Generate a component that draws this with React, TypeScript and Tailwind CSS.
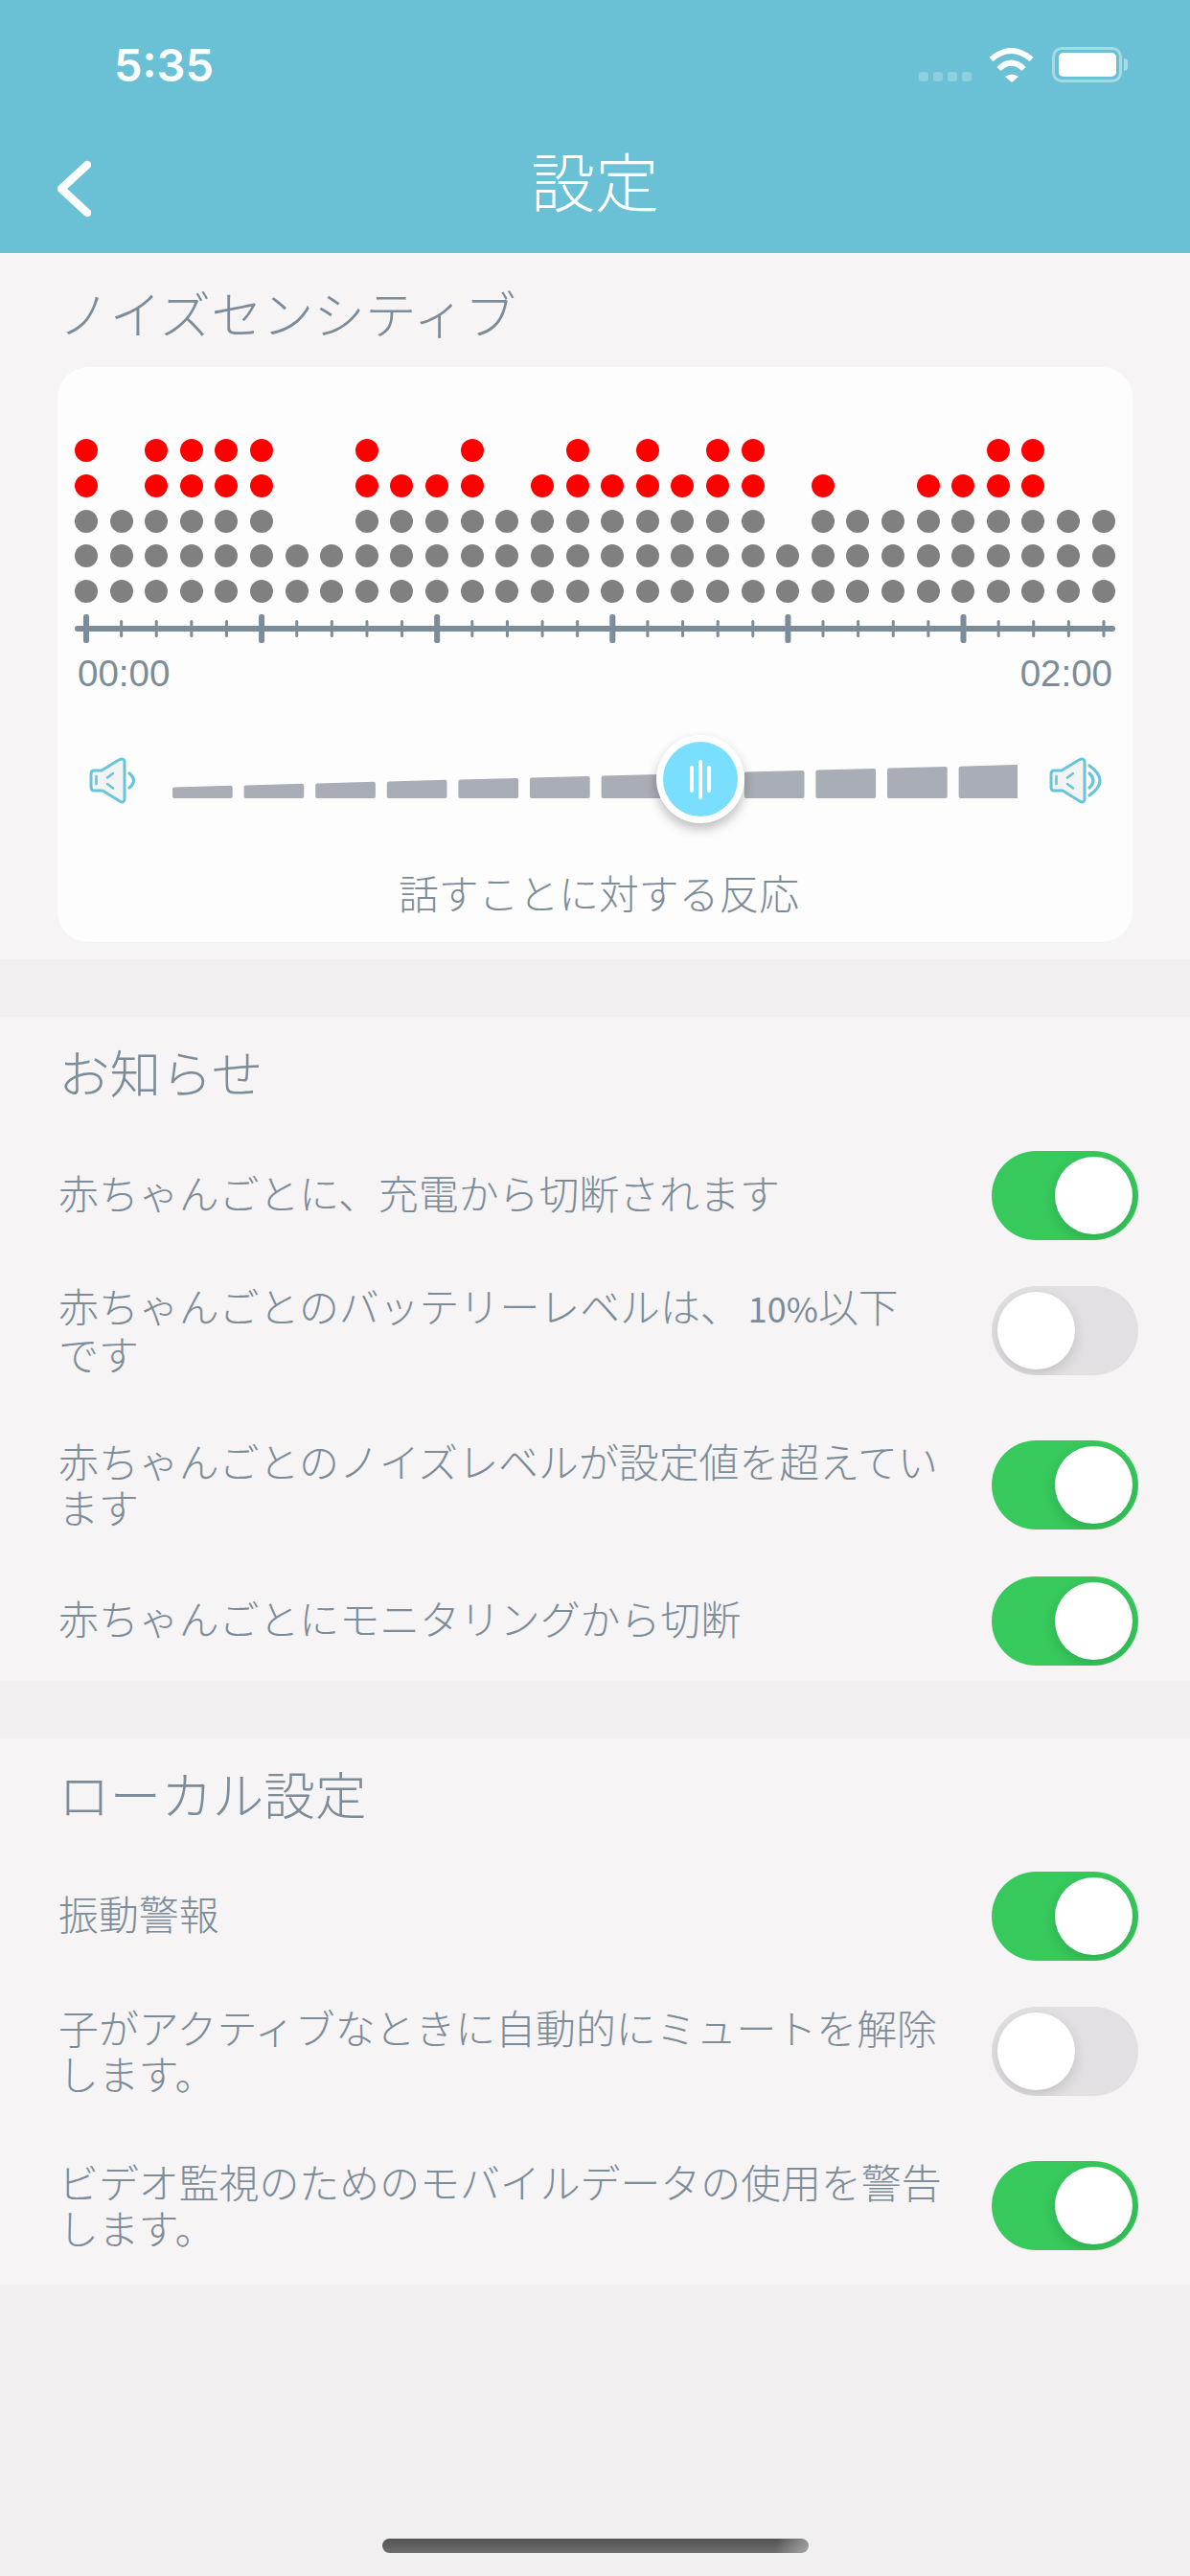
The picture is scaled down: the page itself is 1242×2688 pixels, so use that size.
import React from "react";

const heights = [5,3,5,5,5,5,2,2,5,4,4,5,3,4,5,4,5,4,5,5,2,4,3,3,4,4,5,5,3,3];
const BAR = "#a8adb6";
const CYAN = "#68c5d9";

function Dots() {
  return (
    <div className="flex justify-between">
      {heights.map((h, c) => (
        <div key={c} className="flex h-[171px] w-6 flex-col justify-between">
          {[4, 3, 2, 1, 0].map((r) =>
            r < h ? (
              <div key={r} className={r >= 3 ? "h-6 w-6 rounded-full bg-[#ff0000]" : "h-6 w-6 rounded-full bg-[#808080]"} />
            ) : (
              <div key={r} className="h-6 w-6" />
            )
          )}
        </div>
      ))}
    </div>
  );
}

function Axis() {
  return (
    <svg width="1086" height="30" viewBox="0 0 1086 30" className="mt-3 block">
      <rect x="0" y="12" width="1086" height="6" rx="3" fill="#7c8c99" />
      {heights.map((_, i) => {
        const x = 12 + 36.62 * i;
        return i % 5 === 0 ? (
          <rect key={i} x={x - 3} y="0" width="6" height="30" rx="2.5" fill="#7c8c99" />
        ) : (
          <rect key={i} x={x - 1.5} y="6" width="3" height="18" rx="1.5" fill="#7c8c99" />
        );
      })}
    </svg>
  );
}

function SpeakerBody({ dx = 0 }: { dx?: number }) {
  return (
    <g transform={`translate(${dx} 0)`} fill="none" stroke={CYAN} strokeWidth="3" strokeLinecap="round" strokeLinejoin="round">
      <path d="M18 29H26L44 18Q50 15 50 21V58Q50 64 45 61L27 50H18Q15 50 15 46V33Q15 29 18 29Z" fill="#f3f3f3" />
      <path d="M20.5 35V43M32 36.5L38 32M32 43L38 47.5" strokeWidth="2.6" />
    </g>
  );
}

function Bars() {
  const w = 62.7;
  const step = 74.6;
  const h = (x: number) => 11.5 + (x / 882) * 23.5;
  return (
    <svg width="882" height="40" viewBox="0 0 882 40" className="block">
      {Array.from({ length: 12 }).map((_, i) => {
        const x0 = i * step;
        const x1 = x0 + w;
        return (
          <polygon
            key={i}
            points={`${x0 + 2},${40 - h(x0) + 2} ${x1 - 2},${40 - h(x1) + 2} ${x1 - 2},38 ${x0 + 2},38`}
            fill={BAR}
            stroke={BAR}
            strokeWidth="4"
            strokeLinejoin="round"
          />
        );
      })}
    </svg>
  );
}

function Slider() {
  return (
    <div className="mt-[45px] flex h-[96px] items-center pl-[33px]">
      <svg width="52" height="50" viewBox="13 15 52 50" className="shrink-0">
        <SpeakerBody />
        <path d="M55 32Q64 39.5 55 47" fill="none" stroke={CYAN} strokeWidth="3.2" strokeLinecap="round" />
      </svg>
      <div className="relative ml-[35px] h-[96px] w-[882px] shrink-0 pt-[26px]">
        <Bars />
        <div className="absolute left-[505px] top-0 flex h-[92px] w-[92px] items-center justify-center rounded-full bg-white shadow-[0_6px_12px_rgba(0,0,0,0.25)]">
          <div className="flex h-[78px] w-[78px] items-center justify-center gap-[5px] rounded-full bg-[#7adfff]">
            <div className="h-[28px] w-1 rounded-full bg-white" />
            <div className="h-[41px] w-1 rounded-full bg-white" />
            <div className="h-[28px] w-1 rounded-full bg-white" />
          </div>
        </div>
      </div>
      <svg width="58" height="50" viewBox="9 15 58 50" className="ml-[32px] shrink-0">
        <SpeakerBody dx={-3} />
        <path d="M52 32Q60 39.5 52 47M52 24Q74 39.5 52 55" fill="none" stroke={CYAN} strokeWidth="3.2" strokeLinecap="round" />
      </svg>
    </div>
  );
}

function Toggle({ on }: { on: boolean }) {
  return (
    <div
      className={
        on
          ? "flex h-[93px] w-[153px] shrink-0 items-center justify-end overflow-hidden rounded-full bg-[#37c95c] px-[6px]"
          : "flex h-[93px] w-[153px] shrink-0 items-center justify-start overflow-hidden rounded-full bg-[#e2e0e3] px-[6px]"
      }
    >
      <div className="h-[81px] w-[81px] rounded-full bg-white shadow-[0_5px_14px_rgba(0,0,0,0.14)]" />
    </div>
  );
}

function Row({ on, two, children }: { on: boolean; two?: boolean; children: React.ReactNode }) {
  return (
    <div className={two ? "flex h-[161px] items-center justify-between" : "flex h-[122px] items-center justify-between"}>
      <div className={two ? "pb-[4px] text-[41.9px] font-light leading-[48px] text-[#7c8c99]" : "pb-[7px] text-[41.9px] font-light leading-[48px] text-[#7c8c99]"}>{children}</div>
      <Toggle on={on} />
    </div>
  );
}

function Title({ children }: { children: React.ReactNode }) {
  return <div className="text-[53.6px] font-light leading-[60px] text-[#7c8c99]">{children}</div>;
}

export default function App() {
  return (
    <div className="flex h-[2688px] w-[1242px] flex-col overflow-hidden bg-[#f1eff0] font-['Noto_Sans_CJK_JP','Liberation_Sans',sans-serif]">
      <header className="h-[264px] shrink-0 bg-[#6ac1d5] pt-[49px] text-white">
        <div className="flex h-[37px] items-center justify-between pl-[119px] pr-[65px]">
          <span className="font-['Inter',sans-serif] text-[47px] font-semibold leading-[37px]">5:35</span>
          <div className="flex items-end">
            <div className="mb-px flex gap-[5px]">
              <div className="h-[10px] w-[10px] rounded-[3px] bg-white/25" />
              <div className="h-[10px] w-[10px] rounded-[3px] bg-white/25" />
              <div className="h-[10px] w-[10px] rounded-[3px] bg-white/25" />
              <div className="h-[10px] w-[10px] rounded-[3px] bg-white/25" />
            </div>
            <svg width="47" height="36" viewBox="0 0 47 36" className="ml-[18px] block">
              <path d="M2.5 12Q23.5 -6 44.5 12M10.5 22Q23.5 9 36.5 22" fill="none" stroke="#fff" strokeWidth="6" />
              <path d="M17 30Q24 25 31 30L24 36Z" fill="#fff" />
            </svg>
            <div className="ml-[19px] flex h-[37px] w-[73px] items-center justify-center rounded-[10px] border-[3px] border-white/40">
              <div className="h-[25px] w-[60px] rounded-[5px] bg-white" />
            </div>
            <div className="mb-[12px] ml-[2px] h-[13px] w-[4px] rounded-r-full bg-white/40" />
          </div>
        </div>
        <div className="mt-[54px] grid h-[100px] grid-cols-[1fr_auto_1fr] items-center">
          <svg width="36" height="60" viewBox="0 0 36 60" className="ml-[59px] mt-[14px] block">
            <path d="M32 5L5 30L32 55" fill="none" stroke="#fff" strokeWidth="8.5" strokeLinecap="round" strokeLinejoin="round" />
          </svg>
          <h1 className="mb-[7px] text-[67px] font-light leading-[80px]">設定</h1>
          <div />
        </div>
      </header>

      <section className="shrink-0 bg-[#f6f4f5] pb-[18px] pt-[32px]">
        <div className="px-[61px]">
          <Title>ノイズセンシティブ</Title>
        </div>
        <div className="mx-[60px] mt-[27px] rounded-[32px] bg-[#fdfdfd] pb-[28px] pt-[75px]">
          <div className="px-[18px]">
            <Dots />
            <Axis />
            <div className="mt-[13px] flex justify-between px-[3px] font-['Liberation_Sans',sans-serif] text-[38.5px] leading-[38px] text-[#7c8c99]">
              <span>00:00</span>
              <span>02:00</span>
            </div>
          </div>
          <Slider />
          <div className="mt-[44px] pl-[8px] text-center text-[41.8px] font-light leading-[48px] text-[#7c8c99]">話すことに対する反応</div>
        </div>
      </section>

      <section className="mt-[60px] shrink-0 bg-[#f6f4f5] pb-[2px] pl-[61px] pr-[54px] pt-[27px]">
        <Title>お知らせ</Title>
        <div className="mt-[38px]">
          <Row on>赤ちゃんごとに、充電から切断されます</Row>
          <Row on={false} two>
            赤ちゃんごとのバッテリーレベルは、<span className="text-[36px] font-normal"> 10%</span>以下
            <br />
            です
          </Row>
          <Row on two>
            赤ちゃんごとのノイズレベルが設定値を超えてい
            <br />
            ます
          </Row>
          <Row on>赤ちゃんごとにモニタリングから切断</Row>
        </div>
      </section>

      <section className="mt-[60px] shrink-0 bg-[#f6f4f5] pb-[2px] pl-[61px] pr-[54px] pt-[27px]">
        <Title>ローカル設定</Title>
        <div className="mt-[37px]">
          <Row on>振動警報</Row>
          <Row on={false} two>
            子がアクティブなときに自動的にミュートを解除
            <br />
            します。
          </Row>
          <Row on two>
            ビデオ監視のためのモバイルデータの使用を警告
            <br />
            します。
          </Row>
        </div>
      </section>

      <div className="mx-auto mb-[24px] mt-auto h-[15px] w-[445px] rounded-full bg-[linear-gradient(100deg,transparent_92%,rgba(255,255,255,0.4)),linear-gradient(180deg,#535353,#6e6e6e)]" />
    </div>
  );
}
